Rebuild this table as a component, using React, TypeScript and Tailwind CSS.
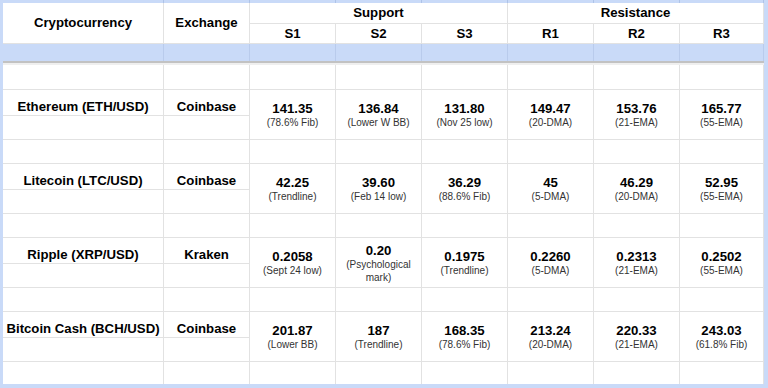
import React from "react";

const cols = "grid-cols-[161px_86px_86px_86px_86px_86px_86px_84px]";

type Val = [string, string];
type Row = { name: string; ex: string; vals: Val[] };

const rows: Row[] = [
  {
    name: "Ethereum (ETH/USD)",
    ex: "Coinbase",
    vals: [
      ["141.35", "(78.6% Fib)"],
      ["136.84", "(Lower W BB)"],
      ["131.80", "(Nov 25 low)"],
      ["149.47", "(20-DMA)"],
      ["153.76", "(21-EMA)"],
      ["165.77", "(55-EMA)"],
    ],
  },
  {
    name: "Litecoin (LTC/USD)",
    ex: "Coinbase",
    vals: [
      ["42.25", "(Trendline)"],
      ["39.60", "(Feb 14 low)"],
      ["36.29", "(88.6% Fib)"],
      ["45", "(5-DMA)"],
      ["46.29", "(20-DMA)"],
      ["52.95", "(55-EMA)"],
    ],
  },
  {
    name: "Ripple (XRP/USD)",
    ex: "Kraken",
    vals: [
      ["0.2058", "(Sept 24 low)"],
      ["0.20", "(Psychological mark)"],
      ["0.1975", "(Trendline)"],
      ["0.2260", "(5-DMA)"],
      ["0.2313", "(21-EMA)"],
      ["0.2502", "(55-EMA)"],
    ],
  },
  {
    name: "Bitcoin Cash (BCH/USD)",
    ex: "Coinbase",
    vals: [
      ["201.87", "(Lower BB)"],
      ["187", "(Trendline)"],
      ["168.35", "(78.6% Fib)"],
      ["213.24", "(20-DMA)"],
      ["220.33", "(21-EMA)"],
      ["243.03", "(61.8% Fib)"],
    ],
  },
];

const cell = "border-r border-b border-[#e2e2e2] bg-white";
const eight = [0, 1, 2, 3, 4, 5, 6, 7];

function EmptyRow() {
  return (
    <>
      {eight.map((i) => (
        <div key={i} className={cell} />
      ))}
    </>
  );
}

export default function App() {
  return (
    <div
      className="w-[768px] h-[388px] overflow-hidden bg-[#c9daf8] pl-[3px] pr-[4px] text-black"
      style={{ fontFamily: '"Liberation Sans", Arial, sans-serif' }}
    >
      {/* top strip */}
      <div className={`grid ${cols} h-[3px]`}>
        {eight.map((i) => (
          <div key={i} className="border-r border-[#aec3e8]" />
        ))}
      </div>
      <div
        className={`grid ${cols} grid-rows-[21px_20px_17px_4px_25px_26px_24px_24px_26px_24px_24px_26px_24px_24px_26px_24px_22px]`}
      >
        {/* header */}
        <div className={`${cell} row-span-2 flex items-center justify-center text-[13.2px] font-bold`}>
          Cryptocurrency
        </div>
        <div className={`${cell} row-span-2 flex items-center justify-center text-[13.2px] font-bold`}>
          Exchange
        </div>
        <div className={`${cell} col-span-3 flex items-center justify-center text-[13.2px] font-bold`}>
          Support
        </div>
        <div className={`${cell} col-span-3 flex items-center justify-center text-[13.2px] font-bold`}>
          Resistance
        </div>
        {["S1", "S2", "S3", "R1", "R2", "R3"].map((h) => (
          <div key={h} className={`${cell} flex items-center justify-center text-[13.2px] font-bold`}>
            {h}
          </div>
        ))}
        {/* blue row */}
        {eight.map((i) => (
          <div key={i} className="border-r border-[#b9cbec] bg-[#c9daf8]" />
        ))}
        {/* frozen separator */}
        <div className="col-span-8 border-t-2 border-[#c2c2c2] bg-[#efefef]" />
        {rows.map((r) => (
          <React.Fragment key={r.name}>
            <EmptyRow />
            <div className={`${cell} flex items-end justify-center pb-[1px] text-[13.2px] font-bold leading-[15px] whitespace-nowrap`}>
              {r.name}
            </div>
            <div className={`${cell} flex items-end justify-center pb-[1px] text-[13.2px] font-bold leading-[15px]`}>
              {r.ex}
            </div>
            {r.vals.map(([v, s], i) => (
              <div
                key={i}
                className={`${cell} row-span-2 flex flex-col items-center justify-center pt-[2px] px-[3px] text-center`}
              >
                <div className="text-[13.2px] font-bold leading-[14px]">{v}</div>
                <div className="text-[10px] leading-[13px] text-[#333333]">{s}</div>
              </div>
            ))}
            <div className={cell} />
            <div className={cell} />
          </React.Fragment>
        ))}
        {eight.map((i) => (
          <div key={i} className="border-r border-[#e2e2e2] bg-white" />
        ))}
      </div>
    </div>
  );
}
